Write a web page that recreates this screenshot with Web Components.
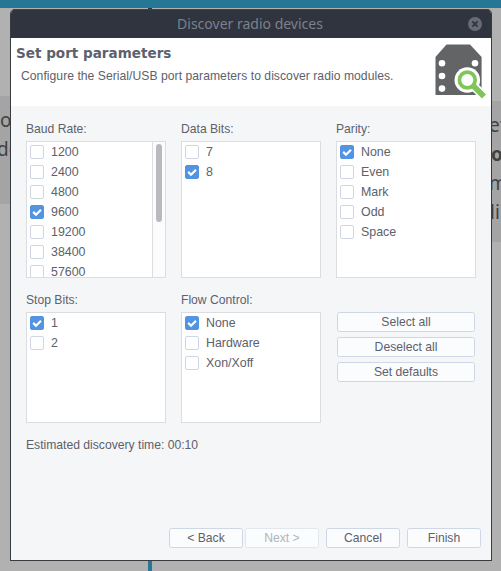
<!DOCTYPE html>
<html lang="en">
<head>
<meta charset="utf-8">
<title>Discover radio devices</title>
<style>
html,body{margin:0;width:501px;height:571px;overflow:hidden;background:#b1b1b1}
body{font:12.15px/16px "Liberation Sans",Arial,sans-serif;color:#5c616c}
</style>
</head>
<body>
<desk-page>
  <page-note slot="left" style="--top:88px;--h:108px;--pad:10px;--x:0px">
    <span>o</span><span style="margin-left:-3px">de</span>
  </page-note>
  <page-note slot="right" style="--top:93px;--h:141px;--pad:10px;--x:-1px">
    <span style="margin-left:-3px">ef</span><b style="margin-left:-1px">o</b><span style="margin-left:-3px">m</span><span style="margin-left:-2px">li</span>
  </page-note>
  <wizard-dialog>
    <span slot="title">Discover radio devices</span>
    <wizard-header slot="header">
      <span slot="heading">Set port parameters</span>
      <span slot="text">Configure the Serial/USB port parameters to discover radio modules.</span>
    </wizard-header>
    <option-list label="Baud Rate:" scroll>
      <check-row>1200</check-row><check-row>2400</check-row><check-row>4800</check-row><check-row checked>9600</check-row><check-row>19200</check-row><check-row>38400</check-row><check-row>57600</check-row>
    </option-list>
    <option-list label="Data Bits:"><check-row>7</check-row><check-row checked>8</check-row></option-list>
    <option-list label="Parity:"><check-row checked>None</check-row><check-row>Even</check-row><check-row>Mark</check-row><check-row>Odd</check-row><check-row>Space</check-row></option-list>
    <option-list label="Stop Bits:"><check-row checked>1</check-row><check-row>2</check-row></option-list>
    <option-list label="Flow Control:"><check-row checked>None</check-row><check-row>Hardware</check-row><check-row>Xon/Xoff</check-row></option-list>
    <button-stack><push-button>Select all</push-button><push-button>Deselect all</push-button><push-button>Set defaults</push-button></button-stack>
    <span slot="status">Estimated discovery time: 00:10</span>
    <push-button slot="nav">&lt; Back</push-button>
    <push-button slot="nav" disabled style="margin-right:5px">Next &gt;</push-button>
    <push-button slot="nav" style="margin-right:5px">Cancel</push-button>
    <push-button slot="nav">Finish</push-button>
  </wizard-dialog>
</desk-page>
<script>
const define = (name, html) => customElements.define(name, class extends HTMLElement {
  constructor() {
    super();
    this.attachShadow({mode: 'open'}).innerHTML = html;
  }
  connectedCallback() {
    const label = this.shadowRoot.querySelector('[data-label]');
    if (label) label.textContent = this.getAttribute('label');
  }
});

define('desk-page', `
<style>
:host{display:grid;grid-template:8px 563px/10px 482px 9px;width:501px;height:571px;background:#b1b1b1;overflow:hidden}
.bar{grid-area:1/1/2/4;background:#267796}
.line{grid-area:2/2;width:4px;margin-left:138px;background:linear-gradient(#123f55 2px,#267796 2px)}
.mid{grid-area:2/2;z-index:1;padding-top:1px}
slot[name=left]{display:block;grid-area:2/1;overflow:hidden}
slot[name=right]{display:block;grid-area:2/3;overflow:hidden}
</style>
<div class="bar"></div><div class="line"></div>
<slot name="left"></slot><slot name="right"></slot><div class="mid"><slot></slot></div>`);

define('page-note', `
<style>
:host{display:flex;flex-direction:column;box-sizing:border-box;height:var(--h);margin-top:var(--top);padding-top:var(--pad);background:#a4a4a4;color:#414141;font:19px/29px "Noto Sans",sans-serif;white-space:nowrap;overflow:hidden}
::slotted(*){display:block;margin-left:var(--x)}
</style><slot></slot>`);

define('wizard-dialog', `
<style>
:host{display:flex;flex-direction:column;box-sizing:border-box;width:482px;height:552px;border:1px solid #383b40;border-top:0;border-radius:5px 5px 0 0;background:#f5f6f8;overflow:hidden}
.title{display:grid;grid-template-columns:30px 1fr 30px;align-items:center;height:29px;box-sizing:border-box;flex:none;background:#2f343f;border-top:1px solid #3b404b;color:#7c818c;font:14px/20px "Noto Sans",sans-serif;text-align:center}
.title slot{display:block;grid-column:2;padding-right:2px}
.title svg{width:14px;height:14px;display:block;margin-left:7px}
.grid{display:grid;grid-template-columns:repeat(3,140px);grid-template-rows:157px 131px;gap:14px 15px;padding:15px 15px 0}
.status{padding:14px 15px 0}
.nav{display:flex;gap:2px;margin-top:auto;padding:0 10px 12px;justify-content:flex-end}
.nav ::slotted(*){width:74px}
</style>
<div class="title"><slot name="title"></slot><svg viewBox="0 0 14 14"><circle cx="7" cy="7" r="7" fill="#676b75"/><path d="M4.4 4.4l5.2 5.2M9.6 4.4L4.4 9.6" stroke="#2f343f" stroke-width="1.9"/></svg></div>
<slot name="header"></slot>
<div class="grid"><slot></slot></div>
<div class="status"><slot name="status"></slot></div>
<div class="nav"><slot name="nav"></slot></div>`);

define('wizard-header', `
<style>
:host{display:flex;justify-content:space-between;box-sizing:border-box;height:68px;flex:none;background:#fff;padding:5px 5px 0}
.h{font:bold 13.55px/20px "DejaVu Sans",sans-serif}
.t{padding:5px 0 0 5px;line-height:16px;white-space:nowrap;letter-spacing:.04px}
svg{display:block;width:51px;height:56px;flex:none;margin-top:1px}
</style>
<div><div class="h"><slot name="heading"></slot></div><div class="t"><slot name="text"></slot></div></div>
<svg viewBox="0 0 51 56"><path d="M11.5.5h23.5L46.6 13v38H.5V13z" fill="#636466"/><g fill="#fff"><circle cx="7" cy="19.3" r="3.3"/><circle cx="7" cy="32" r="3.3"/><circle cx="7" cy="44.6" r="3.3"/><circle cx="40" cy="19.3" r="3.3"/><circle cx="32.3" cy="36" r="12.8"/></g><path d="M39 42.5L50 53" stroke="#fff" stroke-width="9"/><circle cx="32.3" cy="36" r="7.9" fill="#fff" stroke="#80c45c" stroke-width="3.7"/><path d="M37.5 41L49 52.5" stroke="#80c45c" stroke-width="5.8"/></svg>`);

define('option-list', `
<style>
:host{display:flex;flex-direction:column;min-height:0}
.label{height:20px;line-height:16px;flex:none}
.box{display:grid;grid-template-columns:1fr auto;flex:1;min-height:0;box-sizing:border-box;border:1px solid #dcdddf;background:#fff;overflow:hidden}
.rows{overflow:hidden;min-height:0}
.bar{display:none;width:12px;border-left:1px solid #dcdce2;background:#fcfcfc}
:host([scroll]) .bar{display:block}
.thumb{width:6px;height:78px;border-radius:3px;background:#b8babf;margin:2px 0 0 3px}
</style>
<div class="label" data-label></div>
<div class="box"><div class="rows"><slot></slot></div><div class="bar"><div class="thumb"></div></div></div>`);

define('check-row', `
<style>
:host{display:flex;align-items:center;gap:7px;height:20px;padding-left:3px;font-size:12.4px}
.c{box-sizing:border-box;width:14px;height:14px;border:1px solid #cfd6e6;border-radius:2px;background:#fff}
svg{display:none;width:14px;height:14px;margin:-1px}
:host([checked]) .c{background:#5294e2;border-color:#5294e2}
:host([checked]) svg{display:block}
</style>
<div class="c"><svg viewBox="0 0 14 14"><path d="M3.2 6.9l2.8 2.8 5-5" fill="none" stroke="#fff" stroke-width="2.2"/></svg></div><span><slot></slot></span>`);

define('button-stack', `
<style>:host{display:flex;flex-direction:column;gap:5px;padding:20px 1px 0}</style><slot></slot>`);

define('push-button', `
<style>
:host{display:block;box-sizing:border-box;height:20px;border:1px solid #cfd6e6;border-radius:2.5px;background:#fbfcfd;text-align:center;line-height:18px;white-space:nowrap}
:host([disabled]){color:#b1b4ba;border-color:#e2e6ef}
</style><slot></slot>`);
</script>
</body>
</html>
